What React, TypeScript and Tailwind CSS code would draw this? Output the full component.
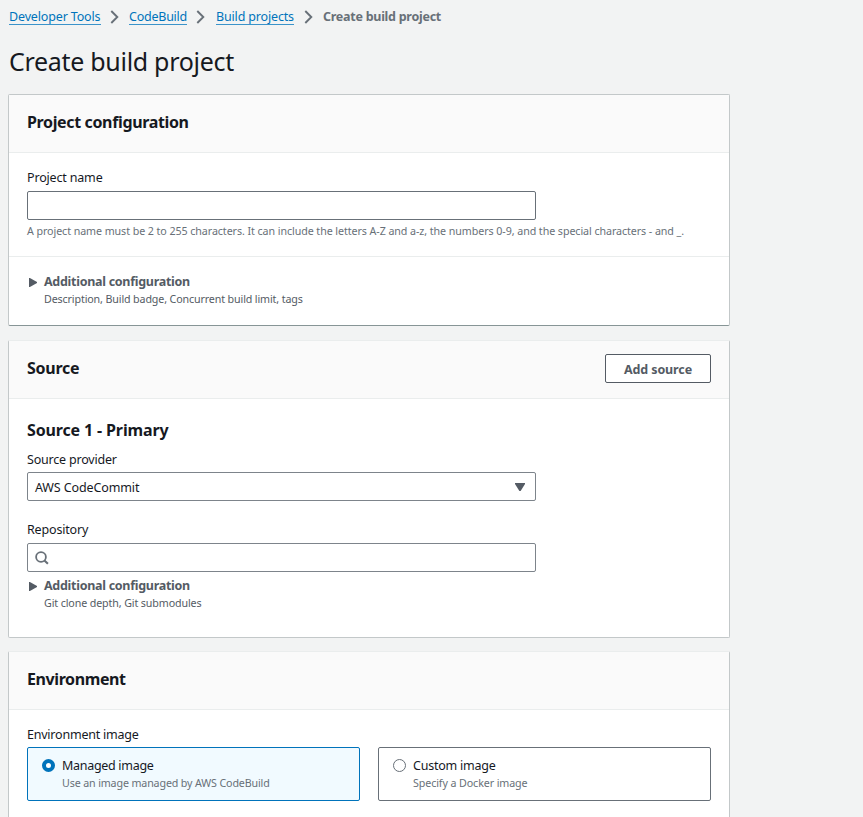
import type { ReactNode } from "react";

const crumbs = [
  { label: "Developer Tools", width: "w-[92px]", tracking: "tracking-[-0.15px]", gap: "gap-[9px] pr-[10px]" },
  { label: "CodeBuild", width: "w-[58px]", tracking: "tracking-[-0.24px]", gap: "gap-[9px] pr-[11px]" },
  { label: "Build projects", width: "w-[78px]", tracking: "tracking-[-0.16px]", gap: "gap-[10px] pr-[10px]" },
];

function Chevron() {
  return (
    <svg className="mt-[-1px] h-[14px] w-[9px] shrink-0" viewBox="0 0 9 14" fill="none" stroke="#687078" strokeWidth="1.9">
      <path d="M1.3 1 L7.3 7 L1.3 13" />
    </svg>
  );
}

function Card({ className, children }: { className: string; children: ReactNode }) {
  return (
    <section className={"flex w-[722px] shrink-0 flex-col rounded-[2px] border border-[#c3c8c9] bg-white " + className}>
      {children}
    </section>
  );
}

function CardHeader({ title, tracking, action }: { title: string; tracking: string; action?: ReactNode }) {
  return (
    <header className="flex h-[58px] shrink-0 items-center justify-between border-b border-[#eaeded] bg-[#fafafa] px-[18px] pb-[2px]">
      <h2 className={"mt-[-2px] text-[16px] leading-[22px] font-bold " + tracking}>{title}</h2>
      {action}
    </header>
  );
}

function Label({ children, tracking }: { children: ReactNode; tracking: string }) {
  return <div className={"h-5 text-[12.5px] leading-[22px] " + tracking}>{children}</div>;
}

function Expander({ detail, tracking }: { detail: string; tracking: string }) {
  return (
    <div className="flex text-[#545b64]">
      <svg className="mt-[6px] ml-[2px] mr-[7px] h-[9px] w-[8px] shrink-0" viewBox="0 0 8 9" fill="#545b64">
        <path d="M0 0 H.9 L8 4 V5 L.9 9 H0Z" />
      </svg>
      <div>
        <div className="h-[18px] text-[12.5px] leading-5 font-bold tracking-[-0.28px]">Additional configuration</div>
        <div className={"text-[10.7px] leading-[18px] " + tracking}>{detail}</div>
      </div>
    </div>
  );
}

function Tile({ title, detail, checked, tracking, detailTracking }: { title: string; detail: string; checked?: boolean; tracking: string; detailTracking: string }) {
  return (
    <div className={"flex h-[54px] w-[333px] rounded-[2px] border pl-[14px] pt-[8px] " + (checked ? "border-[#0073bb] bg-[#f1faff]" : "border-[#687078] bg-white")}>
      <span className={"mt-[3px] mr-[7px] h-[13px] w-[13px] shrink-0 rounded-full bg-white " + (checked ? "border-4 border-[#0073bb]" : "border border-[#687078]")} />
      <div>
        <div className={"h-[18px] text-[12.5px] leading-5 " + tracking}>{title}</div>
        <div className={"text-[10.7px] leading-[18px] text-[#687078] " + detailTracking}>{detail}</div>
      </div>
    </div>
  );
}

export default function App() {
  return (
    <main className="flex h-[817px] w-full flex-col overflow-hidden bg-[#f2f3f3] pl-2 font-['Noto_Sans',sans-serif] whitespace-nowrap text-[#16191f]">
      <nav className="flex h-[34px] shrink-0 items-center pl-px text-[12.5px] leading-4 text-[#0073bb]">
        {crumbs.map((c) => (
          <div key={c.label} className={"flex items-center " + c.gap}>
            <a className={"block h-4 border-b border-[#3b93ca] leading-4 " + c.width + " " + c.tracking}>{c.label}</a>
            <Chevron />
          </div>
        ))}
        <span className="font-bold tracking-[-0.26px] text-[#687078]">Create build project</span>
      </nav>
      <h1 className="h-[60px] shrink-0 pt-[10px] pl-px text-[25px] leading-[34px] tracking-[-0.3px]">Create build project</h1>

      <Card className="h-[232px] border-b-[#879596]">
        <CardHeader title="Project configuration" tracking="tracking-[-0.36px]" />
        <div className="h-[104px] shrink-0 border-b border-[#eaeded] px-[18px] pt-[14px]">
          <Label tracking="tracking-[-0.17px]">Project name</Label>
          <div className="mt-[4px] h-[29px] w-[508.5px] rounded-[2px] border border-[#687078]" />
          <p className="mt-[2px] text-[10.7px] leading-[18px] tracking-[-0.075px] text-[#687078]">
            A project name must be 2 to 255 characters. It can include the letters A-Z and a-z, the numbers 0-9, and the special characters - and _.
          </p>
        </div>
        <div className="px-[18px] pt-[15px]">
          <Expander detail="Description, Build badge, Concurrent build limit, tags" tracking="tracking-[-0.13px]" />
        </div>
      </Card>

      <Card className="mt-[14px] h-[298px] border-t-[#eaeded]">
        <CardHeader
          title="Source"
          tracking="tracking-[-0.25px]"
          action={
            <button className="h-[29px] w-[106px] rounded-[2px] border border-[#545b64] bg-white pt-[2px] text-[12.5px] leading-5 font-bold tracking-[-0.12px] text-[#545b64]">
              Add source
            </button>
          }
        />
        <div className="flex flex-col px-[18px] pt-[20px]">
          <h3 className="text-[16px] leading-[22px] font-bold tracking-[-0.14px]">Source 1 - Primary</h3>
          <div className="mt-[8px]">
            <Label tracking="tracking-[-0.2px]">Source provider</Label>
          </div>
          <div className="mt-[3px] flex h-[29px] w-[508.5px] items-center justify-between rounded-[2px] border border-[#7d848b] pr-[10px] pl-[7px]">
            <span className="pt-[2px] text-[12.5px] leading-5 tracking-[-0.12px]">AWS CodeCommit</span>
            <svg className="h-[8px] w-[10px]" viewBox="0 0 10 8" fill="#545b64">
              <path d="M0 0 H10 V.9 L5.6 8 H4.4 L0 .9Z" />
            </svg>
          </div>
          <div className="mt-[18px]">
            <Label tracking="tracking-[-0.17px]">Repository</Label>
          </div>
          <div className="mt-[4px] flex h-[29px] w-[508.5px] items-center rounded-[2px] border border-[#7d848b] pl-[7px]">
            <svg className="h-[14px] w-[14px]" viewBox="0 0 14 14" fill="none" stroke="#687078" strokeWidth="1.8">
              <circle cx="6" cy="6" r="4.9" />
              <path d="M9.4 9.4 L12.9 12.7" strokeWidth="2.1" />
            </svg>
          </div>
          <div className="mt-[4px]">
            <Expander detail="Git clone depth, Git submodules" tracking="tracking-[-0.12px]" />
          </div>
        </div>
      </Card>

      <Card className="mt-[13px] h-[200px] border-t-[#eaeded]">
        <CardHeader title="Environment" tracking="tracking-[-0.4px]" />
        <div className="px-[18px] pt-[14px]">
          <Label tracking="tracking-[-0.22px]">Environment image</Label>
          <div className="mt-[3px] flex gap-[18px]">
            <Tile checked title="Managed image" tracking="tracking-[-0.3px]" detail="Use an image managed by AWS CodeBuild" detailTracking="tracking-[-0.14px]" />
            <Tile title="Custom image" tracking="tracking-[-0.22px]" detail="Specify a Docker image" detailTracking="tracking-[-0.1px]" />
          </div>
        </div>
      </Card>
    </main>
  );
}
